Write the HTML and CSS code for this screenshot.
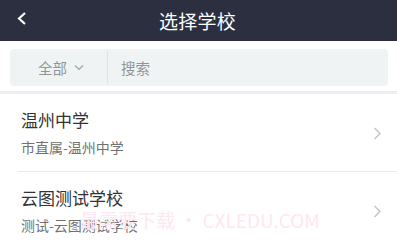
FILE: index.html
```html
<!DOCTYPE html>
<html lang="zh">
<head>
<meta charset="utf-8">
<link rel="stylesheet" href="styles.css">
</head>
<body>
<div class="page">
  <header class="topbar">
    <svg class="back" width="10" height="13" viewBox="0 0 10 13"><path d="M8 1 L2 6.5 L8 12" fill="none" stroke="#fff" stroke-width="2.2"/></svg>
    <h1 class="title">选择学校</h1>
  </header>
  <div class="search-wrap">
    <div class="search">
      <div class="filter">全部<svg class="down" width="10" height="7" viewBox="0 0 10 7"><path d="M1 1.5 L5 5.3 L9 1.5" fill="none" stroke="#a3aaae" stroke-width="1.4"/></svg></div>
      <div class="divider"></div>
      <div class="placeholder">搜索</div>
    </div>
  </div>
  <ul class="list">
    <li class="item">
      <div class="texts">
        <div class="name">温州中学</div>
        <div class="sub">市直属-温州中学</div>
      </div>
      <svg class="arrow" width="9" height="13" viewBox="0 0 9 13"><path d="M1.5 1 L7 6.5 L1.5 12" fill="none" stroke="#c3c7c9" stroke-width="1.5"/></svg>
    </li>
    <li class="item">
      <div class="texts">
        <div class="name">云图测试学校</div>
        <div class="sub">测试-云图测试学校</div>
      </div>
      <svg class="arrow" width="9" height="13" viewBox="0 0 9 13"><path d="M1.5 1 L7 6.5 L1.5 12" fill="none" stroke="#c3c7c9" stroke-width="1.5"/></svg>
    </li>
  </ul>
  <div class="watermark">最需要下载 • CXLEDU.COM</div>
</div>
</body>
</html>
```
FILE: styles.css
```css
* { box-sizing: border-box; }
html, body { margin: 0; padding: 0; background: #fff; }
body { font-family: "Noto Sans CJK SC", "Noto Sans", sans-serif; overflow: hidden; }
.page { position: relative; width: 397px; height: 243px; overflow: hidden; }
.topbar {
  height: 41px;
  background: #2b2f40;
  display: flex;
  align-items: center;
  justify-content: center;
  position: relative;
}
.back { position: absolute; left: 17px; top: 12px; }
.title {
  margin: 0;
  font-weight: 400;
  font-size: 19px;
  line-height: 24px;
  color: #fff;
  letter-spacing: 0.3px;
  margin-left: -2px;
}
.search-wrap {
  padding: 8px 9px 5px 10px;
  background: #fff;
  border-bottom: 3px solid #eceeef;
}
.search {
  height: 37px;
  background: #f0f3f4;
  border-radius: 4px;
  display: flex;
  align-items: center;
  font-size: 14.5px;
  color: #8e969a;
}
.filter {
  width: 97px;
  padding-left: 28px;
  display: flex;
  align-items: center;
  gap: 7px;
}
.divider { width: 1px; height: 33px; background: #dfe3e5; }
.placeholder { padding-left: 13px; }
.list { list-style: none; margin: 0; padding: 0; }
.item {
  position: relative;
  display: flex;
  align-items: center;
  justify-content: space-between;
  padding: 15px 15px 15px 21px;
}
.item + .item::before {
  content: "";
  position: absolute;
  left: 18px;
  right: 0;
  top: -1px;
  height: 1px;
  background: #e8e9ea;
}
.item + .item { margin-top: 1px; }
.name { font-size: 17px; line-height: 22px; color: #333; }
.sub { font-size: 14px; line-height: 18px; color: #717171; margin-top: 7px; }
.arrow { flex: none; margin-top: 1px; }
.watermark {
  position: absolute;
  left: 80px;
  top: 209px;
  font-size: 19px;
  line-height: 22px;
  color: #fde8f1;
  pointer-events: none;
  white-space: nowrap;
}
```
